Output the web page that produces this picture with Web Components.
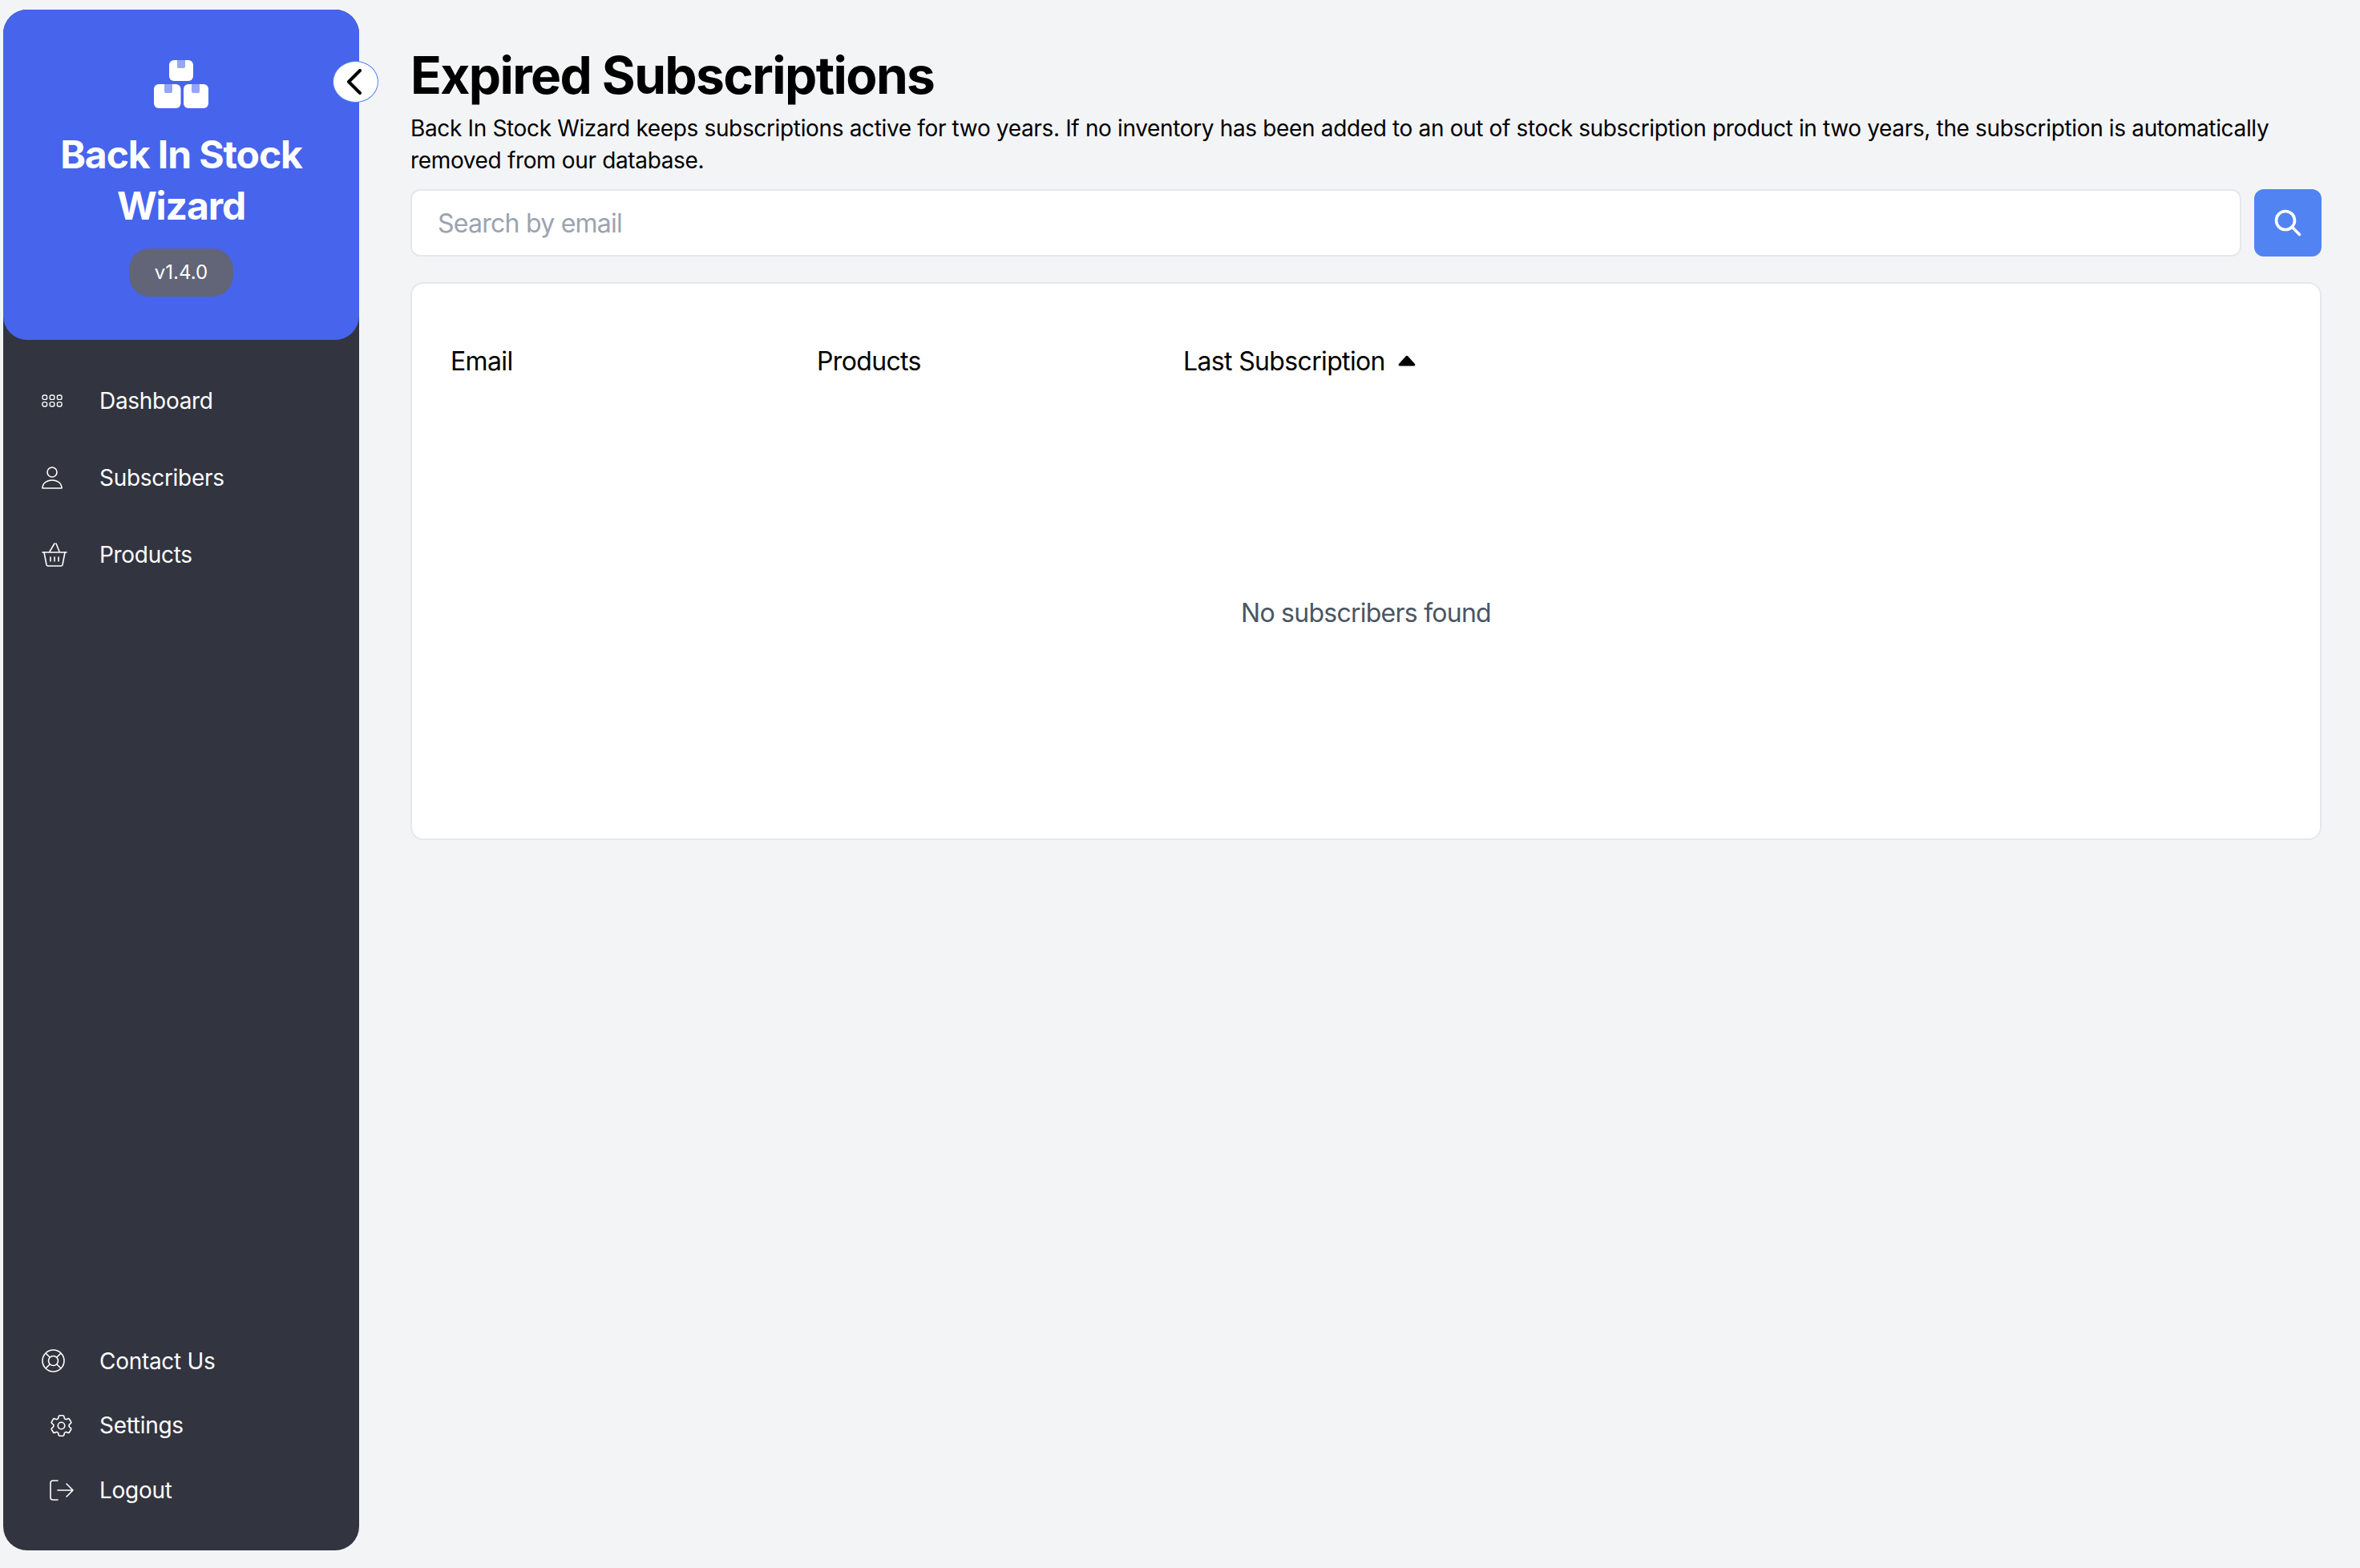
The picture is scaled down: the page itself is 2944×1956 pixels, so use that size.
<!DOCTYPE html>
<html lang="en">
<head>
<meta charset="utf-8">
<title>Expired Subscriptions</title>
<style>
    html, body { margin: 0; height: 100%; background: #f3f4f6; }
    body { font-family: Inter, "Liberation Sans", sans-serif; display: flex; height: 1956px; overflow: hidden; }
    svg { display: block; }
</style>
</head>
<body>
<side-bar>
    <nav-item slot="top">
        <svg slot="icon" width="26" height="16" viewBox="0 0 26 16" fill="none" stroke="#fff" stroke-width="1.4"><rect x="1" y="1" width="5.600" height="5.400" rx="2"/><rect x="10.200" y="1" width="5.600" height="5.400" rx="2"/><rect x="19.400" y="1" width="5.600" height="5.400" rx="2"/><rect x="1" y="9.600" width="5.600" height="5.400" rx="2"/><rect x="10.200" y="9.600" width="5.600" height="5.400" rx="2"/><rect x="19.400" y="9.600" width="5.600" height="5.400" rx="2"/></svg>
        Dashboard
    </nav-item>
    <nav-item slot="top">
        <svg slot="icon" width="26" height="28" viewBox="0 0 26 28" fill="none" stroke="#fff" stroke-width="1.6"><circle cx="13" cy="7" r="6"/><path d="M1 27c0-6 5-10 12-10s12 4 12 10z" stroke-linejoin="round"/></svg>
        Subscribers
    </nav-item>
    <nav-item slot="top">
        <svg slot="icon" width="32" height="30" viewBox="0 0 32 30" fill="none" stroke="#fff" stroke-width="1.6" stroke-linecap="round" stroke-linejoin="round"><path d="M1 12h30"/><path d="M3 12l3 15.500a2 2 0 0 0 2 1.500h16a2 2 0 0 0 2-1.500L29 12"/><path d="M10 11l6-10M22 11L18 1"/><path d="M11 18v5M16 18v5M21 18v5"/></svg>
        Products
    </nav-item>
    <nav-item slot="bottom">
        <svg slot="icon" width="29" height="29" viewBox="0 0 29 29" fill="none" stroke="#fff" stroke-width="1.6"><circle cx="14.500" cy="14.500" r="13.500"/><circle cx="14.500" cy="14.500" r="6"/><path d="M5 5l5.300 5.300M24 5l-5.300 5.300M5 24l5.300-5.300M24 24l-5.300-5.300"/></svg>
        Contact Us
    </nav-item>
    <nav-item slot="bottom" style="--indent:11px">
        <svg slot="icon" width="27" height="29" viewBox="2.500 2 19 20" fill="none" stroke="#fff" stroke-width="1.150" stroke-linecap="round" stroke-linejoin="round"><path d="M9.594 3.940c.09-.542.560-.940 1.110-.940h2.593c.550 0 1.020.398 1.110.940l.213 1.281c.063.374.313.686.645.870.074.040.147.083.220.127.324.196.720.257 1.075.124l1.217-.456a1.125 1.125 0 0 1 1.370.490l1.296 2.247a1.125 1.125 0 0 1-.260 1.431l-1.003.827c-.293.240-.438.613-.431.992a6.759 6.759 0 0 1 0 .255c-.007.378.138.750.430.990l1.005.828c.424.350.534.954.260 1.430l-1.298 2.247a1.125 1.125 0 0 1-1.369.491l-1.217-.456c-.355-.133-.750-.072-1.076.124a6.570 6.570 0 0 1-.220.128c-.331.183-.581.495-.644.869l-.213 1.280c-.090.543-.560.941-1.110.941h-2.594c-.550 0-1.020-.398-1.110-.940l-.213-1.281c-.062-.374-.312-.686-.644-.870a6.520 6.520 0 0 1-.220-.127c-.325-.196-.720-.257-1.076-.124l-1.217.456a1.125 1.125 0 0 1-1.369-.490l-1.297-2.247a1.125 1.125 0 0 1 .260-1.431l1.004-.827c.292-.240.437-.613.430-.992a6.932 6.932 0 0 1 0-.255c.007-.378-.138-.750-.430-.990l-1.004-.828a1.125 1.125 0 0 1-.260-1.430l1.297-2.247a1.125 1.125 0 0 1 1.370-.491l1.216.456c.356.133.751.072 1.076-.124.072-.044.146-.087.220-.128.332-.183.582-.495.644-.869l.214-1.281z"/><circle cx="12" cy="12" r="3"/></svg>
        Settings
    </nav-item>
    <nav-item slot="bottom" style="--indent:10px">
        <svg slot="icon" width="30" height="26" viewBox="0 0 30 26" fill="none" stroke="#fff" stroke-width="1.600" stroke-linecap="round" stroke-linejoin="round"><path d="M10 1H4a3 3 0 0 0-3 3v18a3 3 0 0 0 3 3h6"/><path d="M10 13h19M21 5l8 8-8 8"/></svg>
        Logout
    </nav-item>
</side-bar>

<main-area>
    <span slot="title">Expired Subscriptions</span>
    <span slot="intro">Back In Stock Wizard keeps subscriptions active for two years. If no inventory has been added to an out of stock subscription product in two years, the subscription is automatically removed from our database.</span>
    <search-bar slot="search"></search-bar>
    <subscriber-table slot="table"></subscriber-table>
</main-area>

<script>
class SideBar extends HTMLElement {
    constructor() {
        super();
        this.attachShadow({mode: 'open'}).innerHTML = `
        <style>
        :host {
            display: flex;
            flex-direction: column;
            flex: none;
            position: relative;
            width: 444px;
            height: 1922px;
            margin: 12px 0 0 4px;
            background: #32343f;
            border-radius: 30px;
            color: #fff;
        }
        .head {
            height: 412px;
            box-sizing: border-box;
            padding-top: 63px;
            background: #4764ec;
            border-radius: 30px;
            display: flex;
            flex-direction: column;
            align-items: center;
        }
        h2 {
            margin: 26px 0 0;
            font-size: 48px;
            line-height: 64px;
            font-weight: 700;
            letter-spacing: -1.100px;
            text-align: center;
        }
        .version {
            margin-top: 21px;
            width: 130px;
            height: 60px;
            line-height: 60px;
            text-align: center;
            border-radius: 26px;
            background: #616577;
            font-size: 24px;
        }
        .toggle {
            position: absolute;
            left: 411px;
            top: 64px;
            width: 57px;
            height: 52px;
            box-sizing: border-box;
            border: 1.500px solid #5183f2;
            border-radius: 50%;
            background: #fff;
            display: flex;
            align-items: center;
            justify-content: center;
        }
        .toggle svg { margin-right: 4px; }
        .top { padding-top: 28px; display: flex; flex-direction: column; }
        .bottom { margin-top: auto; padding-bottom: 35px; display: flex; flex-direction: column; --row: 80.500px; }
        </style>
        <div class="head">
            <svg width="68" height="60" viewBox="0 0 68 60">
                <rect x="19" y="0" width="30" height="26" rx="6" fill="#fff"/>
                <path d="M29 0h10v8a2 2 0 0 1-2 2h-6a2 2 0 0 1-2-2z" fill="#95a7f4"/>
                <rect x="0" y="30" width="33.500" height="30" rx="6" fill="#fff"/>
                <path d="M13 30h10v9a2 2 0 0 1-2 2h-6a2 2 0 0 1-2-2z" fill="#95a7f4"/>
                <rect x="37" y="30" width="31" height="30" rx="6" fill="#fff"/>
                <path d="M47 30h10v9a2 2 0 0 1-2 2h-6a2 2 0 0 1-2-2z" fill="#95a7f4"/>
            </svg>
            <h2>Back In Stock<br>Wizard</h2>
            <div class="version">v1.4.0</div>
        </div>
        <div class="toggle">
            <svg width="20" height="32" viewBox="0 0 20 32" fill="none" stroke="#000" stroke-width="4" stroke-linecap="round" stroke-linejoin="round"><path d="M17 2L3 16l14 14"/></svg>
        </div>
        <div class="top"><slot name="top"></slot></div>
        <div class="bottom"><slot name="bottom"></slot></div>
        `;
    }
}

class NavItem extends HTMLElement {
    constructor() {
        super();
        this.attachShadow({mode: 'open'}).innerHTML = `
        <style>
        :host {
            display: flex;
            align-items: center;
            height: var(--row, 96px);
            font-size: 28px;
            letter-spacing: -0.300px;
            color: #fff;
        }
        .icon {
            flex: none;
            width: 120px;
            box-sizing: border-box;
            padding-left: calc(48px + var(--indent, 0px));
        }
        </style>
        <div class="icon"><slot name="icon"></slot></div>
        <slot></slot>
        `;
    }
}

class MainArea extends HTMLElement {
    constructor() {
        super();
        this.attachShadow({mode: 'open'}).innerHTML = `
        <style>
        :host {
            display: block;
            flex: 1;
            min-width: 0;
            padding: 58px 48px 0 64px;
            color: #000;
        }
        h1 {
            margin: 0;
            font-size: 64px;
            line-height: 72px;
            font-weight: 700;
            letter-spacing: -1.620px;
        }
        p {
            margin: 10px 0 16px;
            font-size: 28px;
            line-height: 40px;
            letter-spacing: -0.350px;
        }
        </style>
        <h1><slot name="title"></slot></h1>
        <p><slot name="intro"></slot></p>
        <slot name="search"></slot>
        <slot name="table"></slot>
        `;
    }
}

class SearchBar extends HTMLElement {
    constructor() {
        super();
        this.attachShadow({mode: 'open'}).innerHTML = `
        <style>
        :host { display: flex; gap: 16px; height: 84px; }
        input {
            flex: 1;
            min-width: 0;
            box-sizing: border-box;
            padding: 0 32px;
            border: 2px solid #e5e7eb;
            border-radius: 12px;
            background: #fff;
            font: 32px Inter, "Liberation Sans", sans-serif;
            letter-spacing: -0.750px;
            outline: 0;
        }
        input::placeholder { color: #9ca3af; opacity: 1; }
        button {
            flex: none;
            width: 84px;
            padding: 0;
            border: 0;
            border-radius: 12px;
            background: #5183f2;
            display: flex;
            align-items: center;
            justify-content: center;
        }
        </style>
        <input type="search" placeholder="Search by email">
        <button type="button">
            <svg width="34" height="34" viewBox="0 0 34 34" fill="none" stroke="#fff" stroke-width="3.600" stroke-linecap="round"><circle cx="14" cy="14" r="11.500"/><path d="M23 23l8.500 8.500"/></svg>
        </button>
        `;
    }
}

class SubscriberTable extends HTMLElement {
    constructor() {
        super();
        this.attachShadow({mode: 'open'}).innerHTML = `
        <style>
        :host {
            display: flex;
            flex-direction: column;
            box-sizing: border-box;
            height: 696px;
            margin-top: 32px;
            border: 2px solid #e5e7eb;
            border-radius: 16px;
            background: #fff;
        }
        .cols {
            display: grid;
            grid-template-columns: repeat(3, 457px);
            padding: 73px 48px 0;
            font-size: 32px;
            line-height: 48px;
            letter-spacing: -0.650px;
            color: #000;
        }
        .sort { display: flex; align-items: center; gap: 16px; }
        .sort svg { margin-top: -3px; }
        .empty {
            margin-top: 266px;
            text-align: center;
            font-size: 32px;
            line-height: 48px;
            letter-spacing: -0.750px;
            color: #4b5563;
        }
        </style>
        <div class="cols">
            <div>Email</div>
            <div>Products</div>
            <div class="sort">Last Subscription
                <svg width="22" height="14" viewBox="0 0 22 14" fill="#000"><path d="M9.500 1.500a2 2 0 0 1 3 0L21 11a1.500 1.500 0 0 1-1 2.500H2A1.500 1.500 0 0 1 1 11z"/></svg>
            </div>
        </div>
        <div class="empty">No subscribers found</div>
        `;
    }
}

customElements.define('side-bar', SideBar);
customElements.define('nav-item', NavItem);
customElements.define('main-area', MainArea);
customElements.define('search-bar', SearchBar);
customElements.define('subscriber-table', SubscriberTable);
</script>
</body>
</html>
